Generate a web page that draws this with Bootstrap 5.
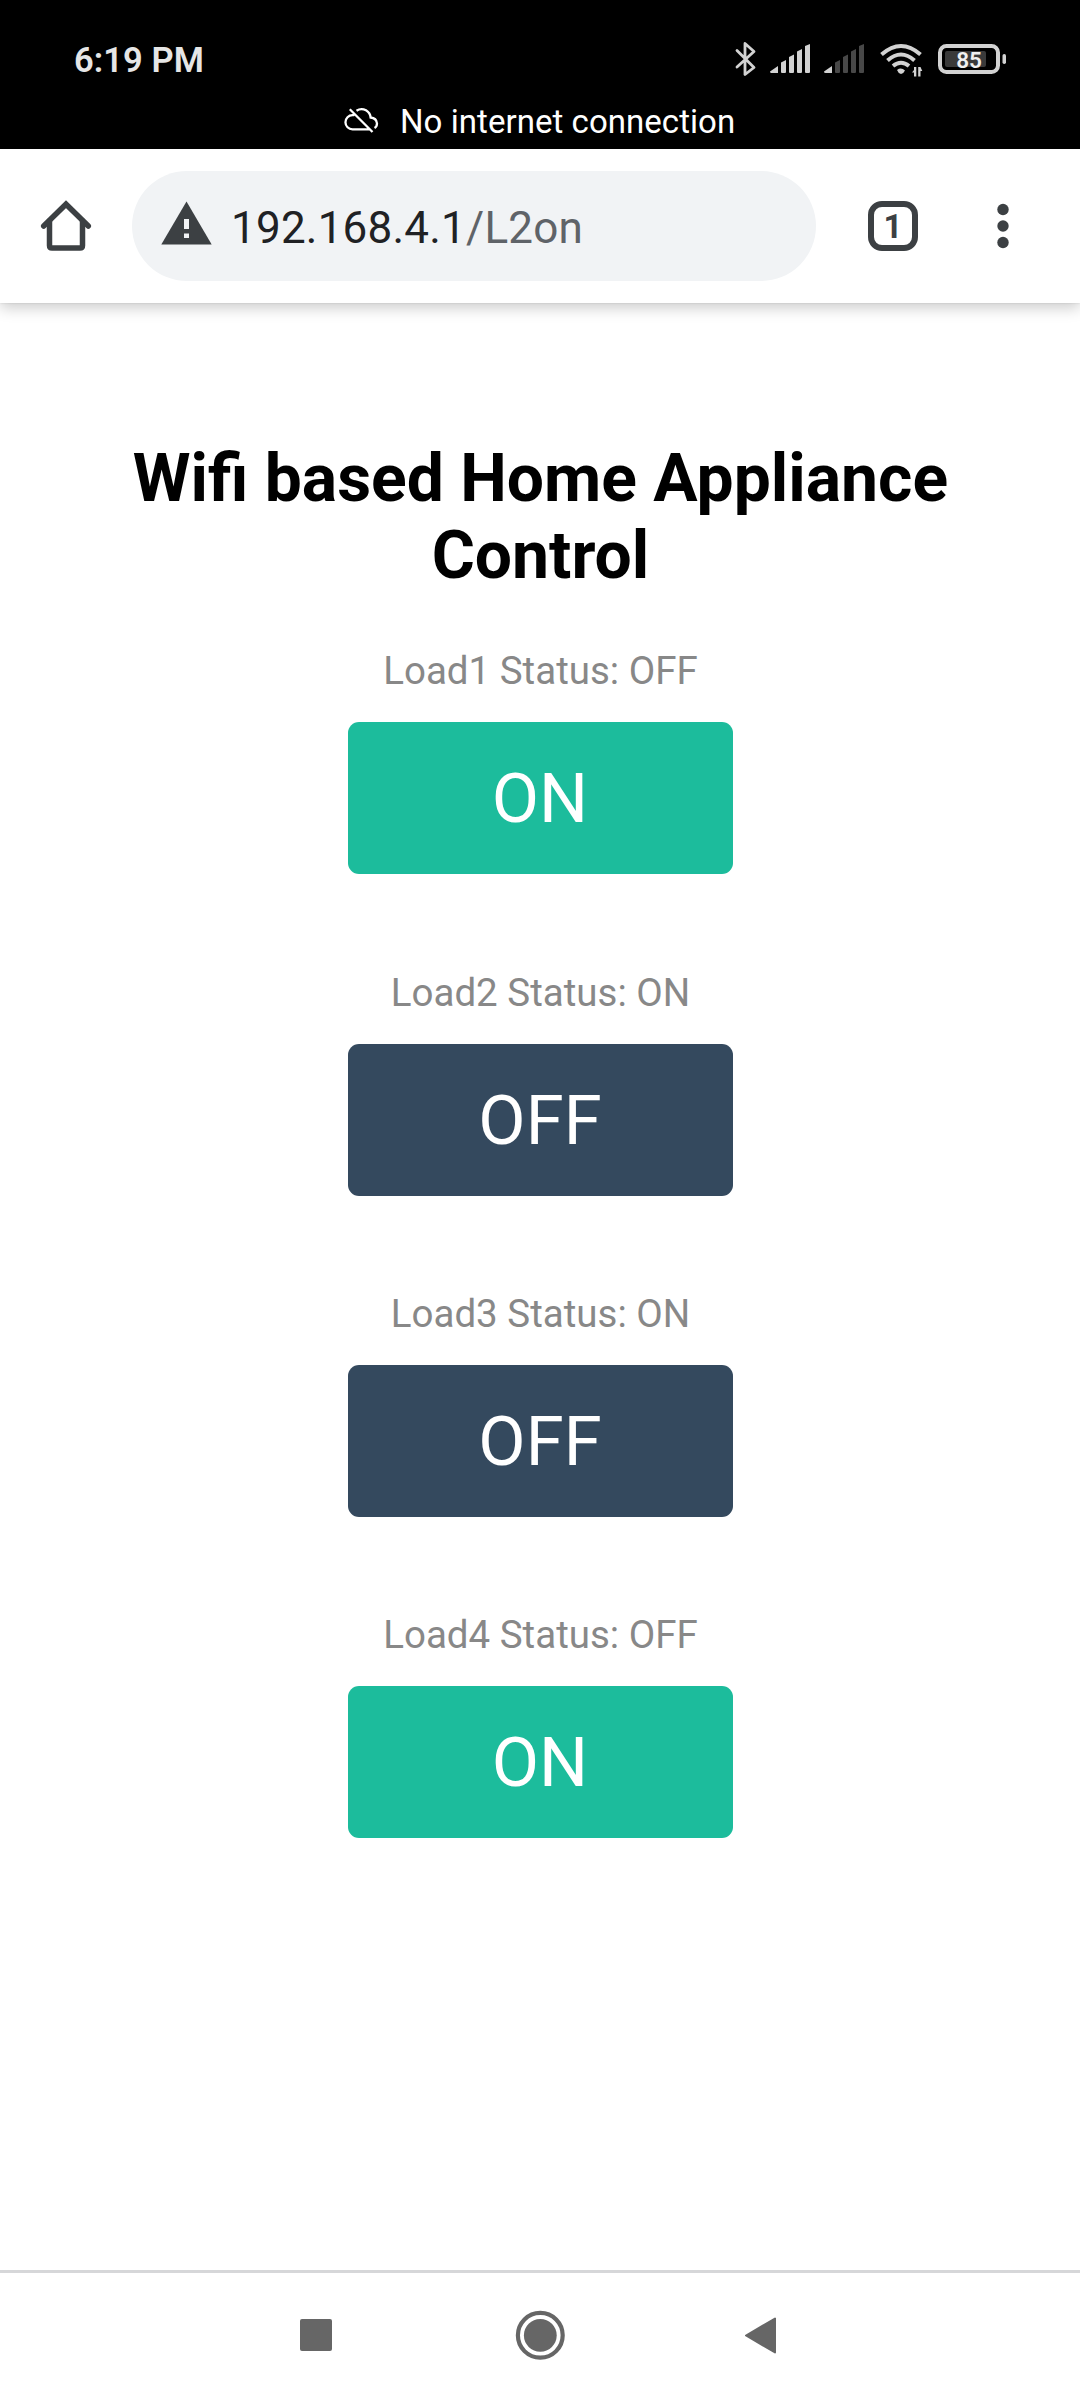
<!DOCTYPE html>
<html lang="en">
<head>
<meta charset="utf-8">
<meta name="viewport" content="width=device-width, initial-scale=1">
<title>Load Control</title>
<link href="https://cdn.jsdelivr.net/npm/bootstrap@5.3.0/dist/css/bootstrap.min.css" rel="stylesheet">
<style>
  body { font-family: Roboto, "Liberation Sans", sans-serif; height: 2400px; overflow: hidden; background: #fff; }
  svg { display: block; flex: none; }
  .status-area { height: 149px; background: #000; flex: none; }
  .status-row { height: 80px; padding: 39px 73px 0 74px; }
  .clock { font-size: 34.5px; line-height: 42px; font-weight: 600; color: #e6e6e6; letter-spacing: .1px; }
  .notice { font-size: 33px; line-height: 40px; color: #fff; padding: 22px 0 0 344px; gap: 21px; letter-spacing: .05px; }
  .notice svg { margin-top: 5px; }
  .toolbar { height: 154px; background: #fff; flex: none; padding-left: 40px; box-shadow: 0 0 2px rgba(0,0,0,.12), 0 5px 14px rgba(0,0,0,.2); }
  .omnibox { width: 684px; height: 110px; border-radius: 55px; background: #f1f3f5; margin-left: 40px; padding-left: 28px; gap: 19px; }
  .omnibox .address { font-size: 44px; line-height: 52px; color: #202124; white-space: nowrap; letter-spacing: .22px; padding-top: 4px; }
  .omnibox .path { color: #5f6368; }
  .tabs-btn { width: 50px; height: 50px; border: 6px solid #3c4043; border-radius: 14px; margin-left: 52px; font-size: 33px; line-height: 40px; font-weight: 700; color: #3c4043; }
  .menu-btn { margin-left: 79px; }
  .page-body { padding-top: 137px; }
  .page-title { font-size: 66px; line-height: 77px; font-weight: 700; color: #000; margin: 0 0 54.3px; padding: 0 22px 0 23px; }
  .load-label { font-size: 38.5px; line-height: 45px; color: #888; margin: 0 0 29px; padding-left: 1px; }
  .load-btn { width: 385px; height: 152.1px; border: 0; border-radius: 11px; font-size: 68.75px; line-height: 80px; color: #fff; padding: 2px 0 0; margin-bottom: 95.2px; }
  .load-btn:hover { color: #fff; }
  .load-on, .load-on:hover { background: #1cbc9c; }
  .load-off, .load-off:hover { background: #34495e; }
  .nav-keys { height: 130px; flex: none; border-top: 3px solid #d6d7d9; background: #fff; padding: 0 0 4px 300px; }
</style>
</head>
<body class="d-flex flex-column">

<header class="status-area">
  <div class="status-row d-flex justify-content-between align-items-start">
    <div class="clock">6:19 PM</div>
    <svg width="272" height="36" viewBox="735 41 272 36" fill="#d2d2d2" style="margin-top:2px">
      <!-- bluetooth -->
      <path d="M737 50.5 754 67.5 745 74.5V43.5L754 51.5 737 67" fill="none" stroke="#d2d2d2" stroke-width="2.8" stroke-linejoin="round" stroke-linecap="round"/>
      <!-- first SIM -->
      <path d="M770 71.5 778 66V73H771.500Q770 73 770 71.500ZM781 62.500 786 60V72Q786 73 785 73H782Q781 73 781 72ZM789 57 794 54.500V72Q794 73 793 73H790Q789 73 789 72ZM797 51.500 802 49V72Q802 73 801 73H798Q797 73 797 72ZM805 46 810 44V72Q810 73 809 73H806Q805 73 805 72Z"/>
      <!-- second SIM -->
      <path d="M824 71.500 832 66V73H825.500Q824 73 824 71.500Z"/>
      <path fill="#484848" d="M835 62.500 840 60V72Q840 73 839 73H836Q835 73 835 72ZM843 57 848 54.500V72Q848 73 847 73H844Q843 73 843 72ZM851 51.500 856 49V72Q856 73 855 73H852Q851 73 851 72ZM859 46 864 44V72Q864 73 863 73H860Q859 73 859 72Z"/>
      <!-- wifi with traffic arrows -->
      <g fill="none" stroke="#d2d2d2" stroke-width="4">
        <path d="M881.500 54.500Q901 37.500 920.500 54.500"/>
        <path d="M887.500 60.500Q901 48.500 914.500 60.500"/>
        <path d="M893 66Q901 59.500 909 66"/>
      </g>
      <path d="M897 70Q901 67 905 70.500Q904 73 901 74Q898 73 897 70Z"/>
      <path d="M914 67H916.300V76.500H914V72.500H912Q913 71 914 70ZM918.200 67H920.500L922.300 71H920.500V76.500H918.200Z"/>
      <!-- battery -->
      <rect x="940" y="46" width="58" height="26" rx="6.500" fill="none" stroke="#d2d2d2" stroke-width="4"/>
      <rect x="945" y="51" width="41" height="16" rx="2" fill="#3a3a3a"/>
      <rect x="1002.500" y="54" width="3.500" height="10" rx="1.700"/>
      <text x="969" y="68" text-anchor="middle" font-size="22.500" font-weight="600" fill="#f0f0f0">85</text>
    </svg>
  </div>
  <div class="notice d-flex align-items-start">
    <svg width="35" height="27" viewBox="344 107 35 27" fill="none" stroke="#fff" stroke-width="2.300">
      <path d="M349.800 109.300 372.500 132M354.300 115.200H352.500A7 7 0 0 0 352.500 129.300H369.500M356.500 110.800Q361 107.800 366 110.300Q370.300 113 370.600 117.500Q376.500 118 377 123.500Q377 126.500 374.500 128"/>
    </svg>
    <span>No internet connection</span>
  </div>
</header>

<nav class="toolbar d-flex align-items-center">
  <svg width="52" height="52" viewBox="40 200 52 52" fill="none" stroke="#3c4043" stroke-width="5.500" stroke-linejoin="round" stroke-linecap="round">
    <path d="M43.700 226 66 204.200 88.300 226" stroke-linejoin="miter"/>
    <path d="M49.500 221V245.500Q49.500 248 52 248H80Q82.500 248 82.500 245.500V221"/>
  </svg>
  <div class="omnibox d-flex align-items-center">
    <svg width="52" height="52" viewBox="160 200 52 52">
      <path d="M186.500 201.500 211.700 244.500H161.300Z" fill="#3c4043"/>
      <path d="M184 219H189V229H184ZM184 233.500H189V238H184Z" fill="#f1f3f5"/>
    </svg>
    <div class="address">192.168.4.1<span class="path">/L2on</span></div>
  </div>
  <div class="tabs-btn d-flex justify-content-center">1</div>
  <svg class="menu-btn" width="12" height="46" viewBox="997 203 12 46" fill="#3c4043">
    <circle cx="1003" cy="209.500" r="5.700"/><circle cx="1003" cy="226" r="5.700"/><circle cx="1003" cy="242.500" r="5.700"/>
  </svg>
</nav>

<main class="page-body flex-grow-1 d-flex flex-column align-items-center text-center">
  <h1 class="page-title">Wifi based Home Appliance<br>Control</h1>
  <p class="load-label">Load1 Status: OFF</p>
  <a class="btn load-btn load-on d-flex align-items-center justify-content-center" href="#">ON</a>
  <p class="load-label">Load2 Status: ON</p>
  <a class="btn load-btn load-off d-flex align-items-center justify-content-center" href="#">OFF</a>
  <p class="load-label">Load3 Status: ON</p>
  <a class="btn load-btn load-off d-flex align-items-center justify-content-center" href="#">OFF</a>
  <p class="load-label">Load4 Status: OFF</p>
  <a class="btn load-btn load-on d-flex align-items-center justify-content-center" href="#">ON</a>
</main>

<footer class="nav-keys d-flex align-items-center">
  <svg width="478" height="52" viewBox="300 2309 478 52" fill="#666">
    <rect x="300" y="2319" width="32" height="32" rx="2"/>
    <circle cx="540.300" cy="2335.300" r="22.400" fill="none" stroke="#666" stroke-width="4.200"/>
    <circle cx="540.300" cy="2335.300" r="16.400"/>
    <path d="M746 2335.500 775 2318.500V2352.500Z" stroke="#666" stroke-width="2" stroke-linejoin="round"/>
  </svg>
</footer>

<script src="https://cdn.jsdelivr.net/npm/bootstrap@5.3.0/dist/js/bootstrap.bundle.min.js"></script>
</body>
</html>
